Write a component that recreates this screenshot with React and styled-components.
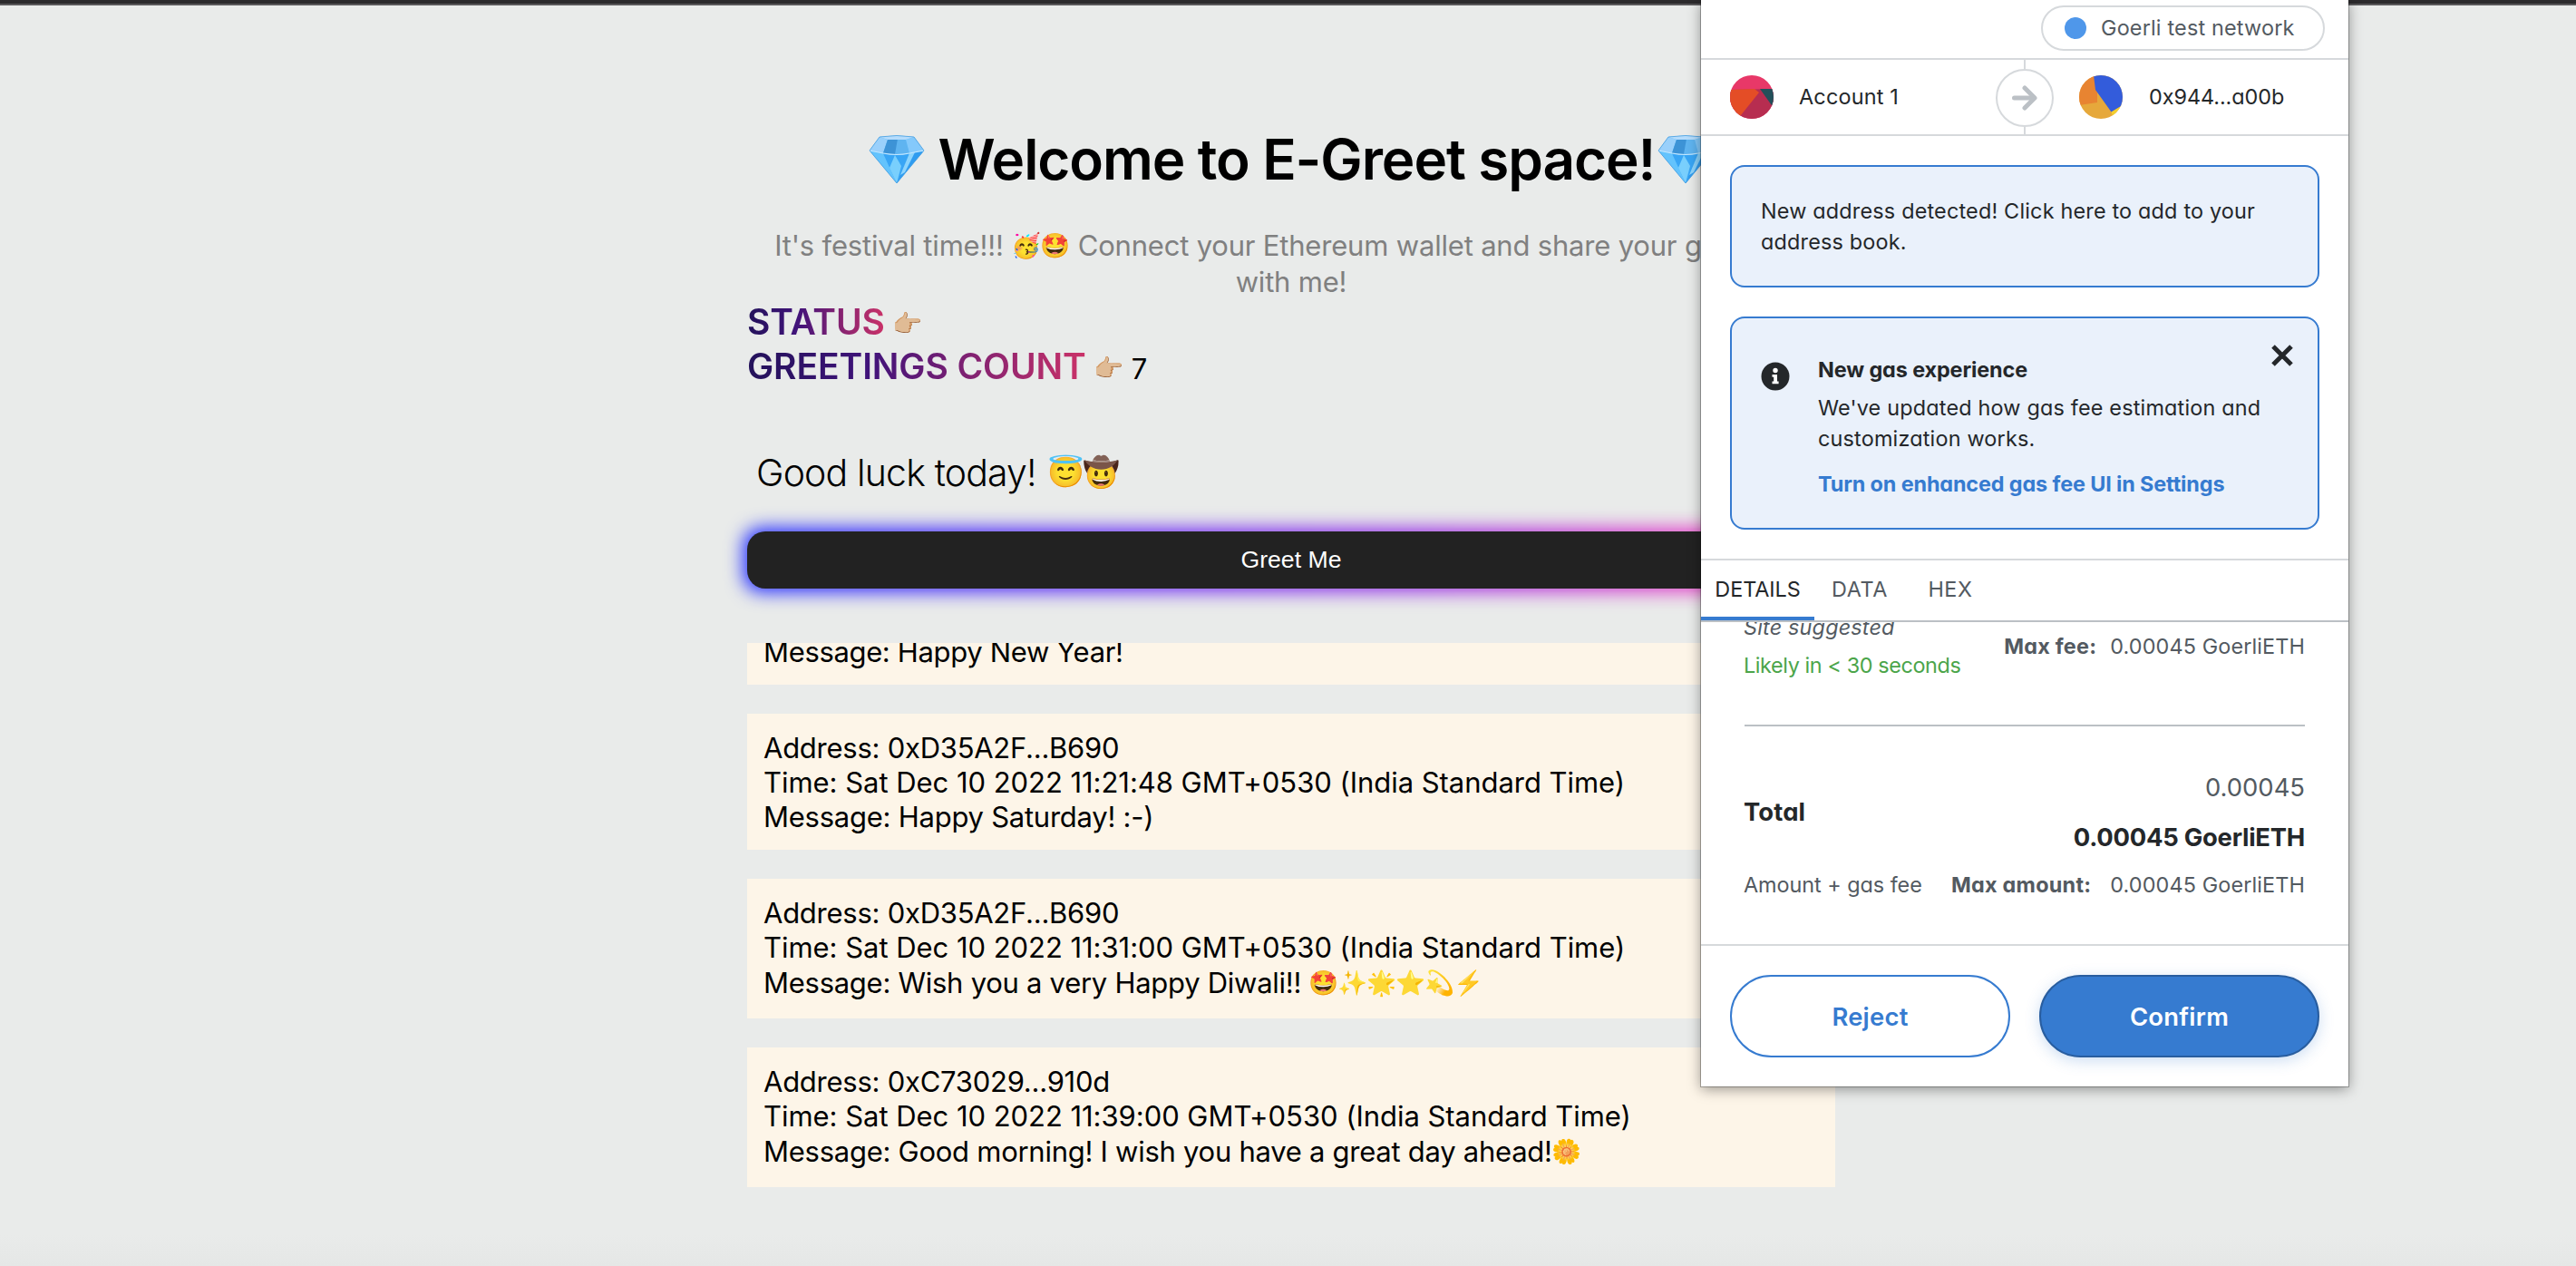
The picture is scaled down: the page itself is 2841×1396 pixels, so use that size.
import React from 'react';
import styled, { createGlobalStyle } from 'styled-components';

const Global = createGlobalStyle`
  *, *::before, *::after { box-sizing: border-box; }
  html, body { margin: 0; padding: 0; background: #e9ebea; }
  body { font-family: Inter, "Noto Sans", sans-serif; color: #000; }
  button { font: inherit; border: 0; margin: 0; padding: 0; background: none; }
`;

/* ---------- greeting page ---------- */

const Page = styled.div`
  position: relative;
  width: 100%;
  height: 1396px;
  overflow: hidden;
  background: linear-gradient(180deg, #e9ebea 0, #e9ebea 1362px, #e5e7e6 1396px);
`;

const TopBar = styled.div`
  height: 6px;
  background: #2c2b2d;
  border-bottom: 2px solid #59585a;
`;

const Centered = styled.div`
  display: flex;
  justify-content: center;
  padding-left: 7px;
`;

const Column = styled.main`
  display: flex;
  flex-direction: column;
  width: 1200px;
  padding-top: 131px;
`;

const Emoji = styled.span`
  display: inline-flex;
  flex: none;
  justify-content: center;
  align-items: center;
  align-self: center;
  width: ${(p) => p.$size}px;
  height: ${(p) => p.$size}px;
  padding-top: ${(p) => p.$drop || 0}px;
  font-family: "Noto Color Emoji", sans-serif;
  font-size: ${(p) => p.$size * 0.83}px;
  line-height: 1;
  letter-spacing: 0;
`;

const Gem = styled.svg`
  flex: none;
  align-self: center;
  width: 64px;
  height: 54px;
`;

const Title = styled.h1`
  display: flex;
  justify-content: center;
  margin: 0;
  font-size: 62px;
  font-weight: 600;
  line-height: 77px;
  letter-spacing: -1.095px;
  white-space: nowrap;
`;

const TitleText = styled.span`
  margin: 0 2px 0 14px;
`;

const Bio = styled.div`
  margin-top: 37px;
  color: #808080;
  font-size: 31px;
  line-height: 40px;
  letter-spacing: -0.19px;
  white-space: nowrap;
`;

const BioLine = styled.div`
  display: flex;
  justify-content: center;
  gap: 9px;
`;

const EmojiGroup = styled.span`
  display: flex;
`;

const StatRow = styled.div`
  display: flex;
  align-items: baseline;
  height: 48.5px;
  line-height: 48.5px;
`;

const StatLabel = styled.span`
  margin-right: 9px;
  font-size: 39px;
  font-weight: 600;
  letter-spacing: -0.1px;
  color: transparent;
  background: linear-gradient(90deg, #23125a 0, #40137a 36%, #cb3268 100%);
  background-clip: text;
  -webkit-background-clip: text;
`;

const StatValue = styled.span`
  margin-left: 9px;
  font-size: 31px;
  line-height: 1;
`;

const Wish = styled.div`
  display: flex;
  margin-top: 68px;
  padding-left: 10px;
  font-size: 41px;
  font-weight: 300;
  line-height: 50px;
  letter-spacing: -0.846px;
`;

const WishText = styled.span`
  margin-right: 13px;
`;

const GreetButton = styled.button`
  position: relative;
  z-index: 0;
  height: 63px;
  margin-top: 40px;
  color: #fff;
  font-family: "Liberation Sans", Arial, sans-serif;
  font-size: 26.67px;
  border-radius: 20px;

  &::before,
  &::after {
    content: "";
    position: absolute;
    z-index: -1;
    border-radius: 20px;
  }
  &::before {
    inset: -4px;
    z-index: -2;
    background: linear-gradient(90deg, #1f2cff 0, #6a30f5 35%, #9a34e4 62%, #e040c8 86%, #ff20b4 100%);
    filter: blur(10px);
  }
  &::after {
    inset: 0;
    background: #222;
  }
`;

const Feed = styled.section`
  display: flex;
  flex-direction: column;
  justify-content: flex-end;
  gap: 32px;
  height: 600px;
  margin-top: 60px;
  overflow: hidden;
`;

const Card = styled.article`
  flex: none;
  padding: 19px 18px 17px;
  background: #fdf5e8;
  font-size: 31px;
`;

const CardLine = styled.div`
  height: 38px;
  line-height: 38px;
  white-space: nowrap;
  letter-spacing: ${(p) => p.$track}px;
`;

const EmojiLine = styled(CardLine)`
  display: flex;
  height: 42px;
  line-height: 40px;
`;

const CardEmojis = styled.span`
  display: flex;
  margin: -2px 0 0 ${(p) => p.$gap}px;
`;

/* ---------- wallet popup ---------- */

const Popup = styled.aside`
  position: absolute;
  top: 0;
  left: 1876px;
  display: flex;
  flex-direction: column;
  width: 714px;
  height: 1198px;
  background: #fff;
  color: #24272a;
  font-size: 23.4px;
  line-height: 34px;
  font-feature-settings: "cv11";
  white-space: nowrap;
  box-shadow: 0 0 0 1px rgba(0, 0, 0, 0.28), 0 3px 14px rgba(0, 0, 0, 0.4);
`;

const NetworkBar = styled.div`
  display: flex;
  justify-content: flex-end;
  height: 66px;
  padding: 6px 26px 0;
  border-bottom: 2px solid #d6d9dc;
`;

const NetworkPill = styled.div`
  display: flex;
  align-items: center;
  gap: 16px;
  width: 313px;
  height: 50px;
  padding-left: 24px;
  border: 2px solid #d6d9dc;
  border-radius: 25px;
  color: #535a61;
  letter-spacing: 0.183px;
`;

const NetworkDot = styled.span`
  width: 24px;
  height: 24px;
  border-radius: 50%;
  background: #4f97ea;
`;

const Parties = styled.div`
  display: grid;
  grid-template-columns: 1fr 64px 1fr;
  height: 84px;
  border-bottom: 2px solid #d6d9dc;
`;

const Party = styled.div`
  display: flex;
  align-items: center;
  gap: ${(p) => p.$gap}px;
  padding-left: ${(p) => p.$inset}px;
  letter-spacing: ${(p) => p.$track}px;
`;

const Avatar = styled.svg`
  flex: none;
  width: 48px;
  height: 48px;
  border-radius: 50%;
`;

const Link = styled.div`
  display: flex;
  flex-direction: column;
  align-items: center;
  &::before,
  &::after {
    content: "";
    width: 2px;
    background: #d6d9dc;
  }
  &::before { height: 10px; }
  &::after { height: 8px; }
`;

const ArrowCircle = styled.div`
  display: flex;
  align-items: center;
  justify-content: center;
  width: 64px;
  height: 64px;
  border: 2px solid #d6d9dc;
  border-radius: 50%;
`;

const Notices = styled.div`
  display: flex;
  flex-direction: column;
  gap: 32px;
  padding: 32px;
`;

const Notice = styled.div`
  position: relative;
  display: flex;
  height: ${(p) => p.$height}px;
  padding: ${(p) => p.$top}px 32px 0;
  border: 2px solid #367bd0;
  border-radius: 16px;
  background: #eaf1fb;
`;

const NoticeText = styled.div`
  letter-spacing: 0.19px;
`;

const InfoIcon = styled.svg`
  flex: none;
  width: 32px;
  height: 32px;
  margin: 8px 31px 0 0;
`;

const GasHeading = styled.div`
  font-weight: 700;
  letter-spacing: -0.11px;
`;

const GasBody = styled.div`
  margin-top: 8px;
  line-height: 33.5px;
  letter-spacing: 0.19px;
`;

const GasLink = styled.div`
  margin-top: 16.5px;
  color: #367bd0;
  font-weight: 700;
  letter-spacing: -0.13px;
`;

const CloseIcon = styled.svg`
  position: absolute;
  top: 29px;
  right: 27px;
  width: 24px;
  height: 24px;
`;

const Tabs = styled.nav`
  display: flex;
  height: 70px;
  border-top: 2px solid #d6d9dc;
  border-bottom: 2px solid #bbc0c5;
`;

const Tab = styled.div`
  display: flex;
  align-items: center;
  justify-content: center;
  width: ${(p) => (p.$active ? 125 : 100)}px;
  padding-top: 2px;
  border-bottom: 4px solid ${(p) => (p.$active ? '#367bd0' : 'transparent')};
  color: ${(p) => (p.$active ? '#24272a' : '#535a61')};
  letter-spacing: ${(p) => (p.$active ? -0.05 : 0.6)}px;
`;

const Details = styled.div`
  height: 355px;
  padding: 0 48px 0 47px;
  overflow: hidden;
  color: #535a61;
`;

const FeeRow = styled.div`
  display: flex;
  justify-content: space-between;
  align-items: center;
  margin-top: ${(p) => p.$top}px;
`;

const Stack = styled.div`
  display: flex;
  flex-direction: column;
  gap: 8px;
`;

const Origin = styled.em`
  font-style: italic;
  letter-spacing: 0.183px;
`;

const Timing = styled.span`
  color: #4ba54a;
  letter-spacing: -0.398px;
`;

const Caption = styled.span`
  letter-spacing: -0.04px;
`;

const Amount = styled.span`
  display: flex;
  gap: ${(p) => p.$gap}px;
  letter-spacing: 0.12px;
`;

const Strong = styled.strong`
  font-weight: 700;
  letter-spacing: 0.25px;
`;

const Divider = styled.hr`
  height: 2px;
  margin: 48px 0 0 1px;
  border: 0;
  background: #bbc0c5;
`;

const TotalLabel = styled.span`
  margin-top: -1px;
  color: #24272a;
  font-size: 27.4px;
  font-weight: 700;
  letter-spacing: 0.15px;
`;

const Totals = styled.div`
  display: flex;
  flex-direction: column;
  align-items: flex-end;
  gap: 15px;
  font-size: 27.4px;
  line-height: 40px;
`;

const GrandTotal = styled.span`
  color: #24272a;
  font-weight: 700;
  letter-spacing: -0.247px;
`;

const Footer = styled.footer`
  display: flex;
  gap: 32px;
  padding: 32px;
  border-top: 2px solid #d6d9dc;
`;

const ActionButton = styled.button`
  flex: 1;
  height: 91px;
  border: 2px solid ${(p) => (p.$primary ? '#285d9f' : '#367bd0')};
  border-radius: 46px;
  background: ${(p) => (p.$primary ? '#367bd0' : '#fff')};
  color: ${(p) => (p.$primary ? '#fff' : '#367bd0')};
  font-size: 27.4px;
  font-weight: 600;
  letter-spacing: 0.25px;
  box-shadow: ${(p) => (p.$primary ? '0 4px 16px rgba(54, 123, 208, 0.25)' : 'none')};
`;

const greetings = [
  { message: 'Happy New Year!', track: -0.346 },
  { address: '0xD35A2F...B690', time: 'Sat Dec 10 2022 11:21:48', message: 'Happy Saturday! :-)', track: -0.25 },
  { address: '0xD35A2F...B690', time: 'Sat Dec 10 2022 11:31:00', message: 'Wish you a very Happy Diwali!!', emojis: ['🤩', '✨', '🌟', '⭐', '💫', '⚡'], gap: 9, track: -0.27 },
  { address: '0xC73029...910d', time: 'Sat Dec 10 2022 11:39:00', message: 'Good morning! I wish you have a great day ahead!', emojis: ['🌼'], gap: 0, track: -0.265 },
];

function Diamond() {
  return (
    <Gem viewBox="0 0 64 54" aria-label="diamond">
      <path d="M13 2Q32-1 51 2L62 17L32 53L2 17Z" fill="#4db4fa" />
      <path d="M13 2L22 5L17 20L2 17Z" fill="#9ad0fb" />
      <path d="M22 5L42 5L46 20Q32 23 17 20Z" fill="#5fb4f0" />
      <path d="M22 5L33 4L30 21L17 20Z" fill="#3d93d6" />
      <path d="M42 5L51 2L62 17L46 20Z" fill="#84c9fb" />
      <path d="M13 2Q32-1 51 2L42 5H22Z" fill="#b5dcfc" />
      <path d="M2 17L17 20L32 53Z" fill="#63c3fd" />
      <path d="M17 20Q32 23 46 20L32 53Z" fill="#38a5f5" />
      <path d="M30 22L37 34L32 53L24 36Z" fill="#79cffd" />
      <path d="M46 20L62 17L32 53Z" fill="#2f9cf0" />
      <path d="M46 20L52 19L41 41L36 44Z" fill="#8cd4fd" />
      <path d="M2 17L17 20Q32 23 46 20L62 17" fill="none" stroke="#c4e8ff" strokeWidth="1.2" />
      <path d="M13 2Q32-1 51 2L62 17L32 53L2 17Z" fill="none" stroke="#4a9fe0" strokeWidth=".8" />
    </Gem>
  );
}

function GreetingCard({ item }) {
  return (
    <Card>
      {item.address && <CardLine $track={-0.255}>Address: {item.address}</CardLine>}
      {item.time && <CardLine $track={-0.04}>Time: {item.time} GMT+0530 (India Standard Time)</CardLine>}
      {item.emojis ? (
        <EmojiLine $track={item.track}>
          <span>Message: {item.message}</span>
          <CardEmojis $gap={item.gap}>
            {item.emojis.map((e) => <Emoji key={e} $size={32}>{e}</Emoji>)}
          </CardEmojis>
        </EmojiLine>
      ) : (
        <CardLine $track={item.track}>Message: {item.message}</CardLine>
      )}
    </Card>
  );
}

function WalletPopup() {
  return (
    <Popup>
      <NetworkBar>
        <NetworkPill><NetworkDot />Goerli test network</NetworkPill>
      </NetworkBar>
      <Parties>
        <Party $inset={32} $gap={28} $track={0.2}>
          <Avatar viewBox="0 0 48 48">
            <rect width="48" height="48" fill="#e83868" />
            <path d="M0 16 L48 15 V48 H0Z" fill="#b72d50" />
            <path d="M0 16 L27 15 L32 19 L12 44 L8 48 H0Z" fill="#e44d26" />
            <path d="M33 15 H48 V36Z" fill="#22505a" />
          </Avatar>
          Account 1
        </Party>
        <Link>
          <ArrowCircle>
            <svg width="28" height="28" viewBox="0 0 28 28" fill="none" stroke="#bbc0c5" strokeWidth="5" strokeLinecap="round" strokeLinejoin="round">
              <path d="M2.500 14H24" />
              <path d="M14 3L25 14L14 25" />
            </svg>
          </ArrowCircle>
        </Link>
        <Party $inset={28} $gap={29} $track={-0.05}>
          <Avatar viewBox="0 0 48 48">
            <rect width="48" height="48" fill="#e6a83b" />
            <path d="M0 0H17L20 19L20 30L0 33Z" fill="#e88431" />
            <path d="M16 0H48V33L35.500 40.500L18 16Z" fill="#335cdb" />
            <path d="M35.500 40.500L48 33V48H38Z" fill="#f3cf2f" />
          </Avatar>
          0x944...a00b
        </Party>
      </Parties>
      <Notices>
        <Notice $height={135} $top={32}>
          <NoticeText>
            New address detected! Click here to add to your<br />
            address book.
          </NoticeText>
        </Notice>
        <Notice $height={235} $top={40}>
          <InfoIcon viewBox="0 0 32 32">
            <circle cx="16" cy="16" r="15.5" fill="#24272a" />
            <circle cx="16" cy="9.500" r="2.700" fill="#fff" />
            <path d="M12.500 14H18V21.500H19.600V24.300H12.500V21.500H14.200V16.800H12.500Z" fill="#fff" />
          </InfoIcon>
          <div>
            <GasHeading>New gas experience</GasHeading>
            <GasBody>
              We've updated how gas fee estimation and<br />
              customization works.
            </GasBody>
            <GasLink>Turn on enhanced gas fee UI in Settings</GasLink>
          </div>
          <CloseIcon viewBox="0 0 24 24" stroke="#24272a" strokeWidth="5">
            <path d="M2 2L22 22M22 2L2 22" />
          </CloseIcon>
        </Notice>
      </Notices>
      <Tabs>
        <Tab $active>DETAILS</Tab>
        <Tab>DATA</Tab>
        <Tab>HEX</Tab>
      </Tabs>
      <Details>
        <FeeRow $top={-11}>
          <Stack>
            <Origin>Site suggested</Origin>
            <Timing>Likely in &lt; 30 seconds</Timing>
          </Stack>
          <Amount $gap={15}><Strong>Max fee:</Strong>0.00045 GoerliETH</Amount>
        </FeeRow>
        <Divider />
        <FeeRow $top={47}>
          <TotalLabel>Total</TotalLabel>
          <Totals>
            <span>0.00045</span>
            <GrandTotal>0.00045 GoerliETH</GrandTotal>
          </Totals>
        </FeeRow>
        <FeeRow $top={16}>
          <Caption>Amount + gas fee</Caption>
          <Amount $gap={21}><Strong>Max amount:</Strong>0.00045 GoerliETH</Amount>
        </FeeRow>
      </Details>
      <Footer>
        <ActionButton>Reject</ActionButton>
        <ActionButton $primary>Confirm</ActionButton>
      </Footer>
    </Popup>
  );
}

export default function App() {
  return (
    <Page>
      <Global />
      <TopBar />
      <Centered>
        <Column>
          <Title>
            <Diamond />
            <TitleText>Welcome to E-Greet space!</TitleText>
            <Diamond />
          </Title>
          <Bio>
            <BioLine>
              <span>It's festival time!!!</span>
              <EmojiGroup><Emoji $size={32}>🥳</Emoji><Emoji $size={32}>🤩</Emoji></EmojiGroup>
              <span>Connect your Ethereum wallet and share your greetings</span>
            </BioLine>
            <BioLine>with me!</BioLine>
          </Bio>
          <StatRow>
            <StatLabel>STATUS</StatLabel>
            <Emoji $size={32} $drop={5}>👉🏼</Emoji>
          </StatRow>
          <StatRow>
            <StatLabel>GREETINGS COUNT</StatLabel>
            <Emoji $size={32} $drop={5}>👉🏼</Emoji>
            <StatValue>7</StatValue>
          </StatRow>
          <Wish>
            <WishText>Good luck today!</WishText>
            <Emoji $size={39.5}>😇</Emoji>
            <Emoji $size={39.5}>🤠</Emoji>
          </Wish>
          <GreetButton>Greet Me</GreetButton>
          <Feed>
            {greetings.map((item, i) => <GreetingCard key={i} item={item} />)}
          </Feed>
        </Column>
      </Centered>
      <WalletPopup />
    </Page>
  );
}
